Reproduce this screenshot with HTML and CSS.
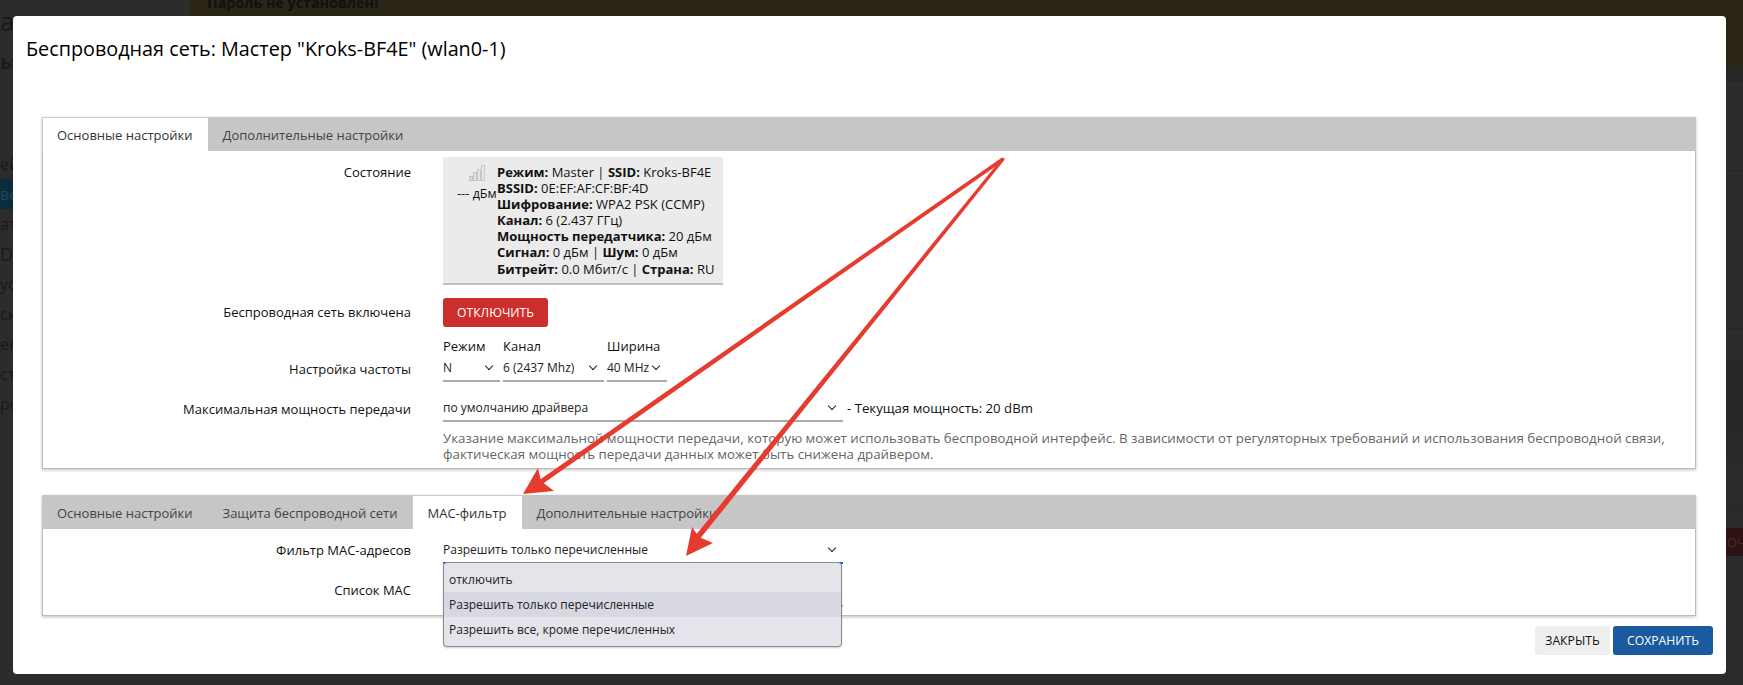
FILE: index.html
```html
<!DOCTYPE html>
<html lang="en">
<head>
    <meta charset="UTF-8">
    <meta name="viewport" content="width=device-width, initial-scale=1.0">
    <title>Беспроводная сеть</title>
    <link rel="stylesheet" href="styles.css">
</head>
<body>
    <div id="page">
        <div id="sidebar">
            <div class="side-head side-head-big">а</div>
            <div class="side-head">ы</div>
            <div class="side-item">ей</div>
            <div class="side-item side-active">во</div>
            <div class="side-item">ат</div>
            <div class="side-item side-latin">D</div>
            <div class="side-item">уст</div>
            <div class="side-item">ск</div>
            <div class="side-item">ев</div>
            <div class="side-item">сти</div>
            <div class="side-item">ро</div>
        </div>
        <div id="main">
            <div id="banner">Пароль не установлен!</div>
            <div class="bg-row bg-row-a"></div>
            <div class="bg-row bg-row-b"></div>
            <div class="bg-row bg-row-c"></div>
            <div class="bg-row bg-row-d"></div>
            <div class="bg-row bg-row-e"></div>
            <div class="bg-row bg-row-f"></div>
            <div class="bg-row bg-row-g"></div>
            <div class="bg-row bg-row-h"></div>
            <div class="bg-row bg-row-i"></div>
            <div class="bg-row bg-row-k"><span class="bg-danger">ОЧ</span></div>
        </div>
    </div>

    <div id="modal">
        <h1 id="modal-title">Беспроводная сеть: Мастер "Kroks-BF4E" (wlan0-1)</h1>

        <div class="section">
            <div class="tabs">
                <div class="tab tab-active">Основные настройки</div>
                <div class="tab">Дополнительные настройки</div>
            </div>
            <div class="section-body">
                <div class="row">
                    <div class="label label-status">Состояние</div>
                    <div class="status-box">
                        <div class="status-signal">
                            <svg class="signal-icon" width="16" height="16" viewBox="0 0 16 16">
                                <rect x="0.5" y="11.5" width="3" height="4" fill="#dcdcdc" stroke="#c2c2c2"/>
                                <rect x="4.5" y="7.5" width="3" height="8" fill="#e2e2e2" stroke="#c2c2c2"/>
                                <rect x="8.5" y="4.5" width="3" height="11" fill="#e6e6e6" stroke="#c8c8c8"/>
                                <rect x="12.5" y="0.5" width="3" height="15" fill="#e8e8e8" stroke="#c8c8c8"/>
                            </svg>
                            <div>--- дБм</div>
                        </div>
                        <div class="status-text">
                            <div><b>Режим:</b> Master | <b>SSID:</b> Kroks-BF4E</div>
                            <div><b>BSSID:</b> 0E:EF:AF:CF:BF:4D</div>
                            <div><b>Шифрование:</b> WPA2 PSK (CCMP)</div>
                            <div><b>Канал:</b> 6 (2.437 ГГц)</div>
                            <div><b>Мощность передатчика:</b> 20 дБм</div>
                            <div><b>Сигнал:</b> 0 дБм | <b>Шум:</b> 0 дБм</div>
                            <div><b>Битрейт:</b> 0.0 Мбит/с | <b>Страна:</b> RU</div>
                        </div>
                    </div>
                </div>

                <div class="row row-button">
                    <div class="label label-button">Беспроводная сеть включена</div>
                    <button class="btn btn-danger">ОТКЛЮЧИТЬ</button>
                </div>

                <div class="row row-freq">
                    <div class="label label-freq">Настройка частоты</div>
                    <div class="freq-col">
                        <div class="freq-head">Режим</div>
                        <div class="select sel-mode">N<i class="chevron"></i></div>
                    </div>
                    <div class="freq-col">
                        <div class="freq-head">Канал</div>
                        <div class="select sel-channel">6 (2437 Mhz)<i class="chevron"></i></div>
                    </div>
                    <div class="freq-col">
                        <div class="freq-head">Ширина</div>
                        <div class="select sel-width">40 MHz<i class="chevron"></i></div>
                    </div>
                </div>

                <div class="row row-power">
                    <div class="label label-power">Максимальная мощность передачи</div>
                    <div class="power-col">
                        <div class="power-line">
                            <div class="select sel-wide">по умолчанию драйвера<i class="chevron"></i></div>
                            <span class="power-now">- Текущая мощность: 20 dBm</span>
                        </div>
                        <div class="help">Указание максимальной мощности передачи, которую может использовать беспроводной интерфейс. В зависимости от регуляторных требований и использования беспроводной связи, фактическая мощность передачи данных может быть снижена драйвером.</div>
                    </div>
                </div>
            </div>
        </div>

        <div class="section section-mac">
            <div class="tabs">
                <div class="tab">Основные настройки</div>
                <div class="tab">Защита беспроводной сети</div>
                <div class="tab tab-active">MAC-фильтр</div>
                <div class="tab">Дополнительные настройки</div>
            </div>
            <div class="section-body section-body-mac">
                <div class="row">
                    <div class="label label-filter">Фильтр MAC-адресов</div>
                    <div class="select sel-wide sel-focus">Разрешить только перечисленные<i class="chevron"></i>
                        <div class="dropdown">
                            <div class="option">отключить</div>
                            <div class="option option-active">Разрешить только перечисленные</div>
                            <div class="option">Разрешить все, кроме перечисленных</div>
                        </div>
                    </div>
                </div>
                <div class="row row-maclist">
                    <div class="label label-filter">Список MAC</div>
                    <div class="select sel-wide sel-list"></div>
                </div>
            </div>
        </div>

        <div id="modal-footer">
            <button class="btn btn-close">ЗАКРЫТЬ</button>
            <button class="btn btn-save">СОХРАНИТЬ</button>
        </div>
    </div>

    <!-- annotation arrows drawn over the screenshot -->
    <svg id="arrows" width="1743" height="685" viewBox="0 0 1743 685">
        <polygon fill="#e63c30" points="1002,157.5 1004.5,158.5 1004,160.5 541,485 538,481"/>
        <polygon fill="#e63c30" points="523,494 538,468 541,481 554,491"/>
        <polygon fill="#e63c30" points="1002,158 1004.5,158.5 1004,160.5 699,540 695,536"/>
        <polygon fill="#e63c30" points="686,556 692,527 699,537 713,543"/>
    </svg>
</body>
</html>
```

FILE: styles.css
```css
body {
    font-family: "Open Sans", "Noto Sans", sans-serif;
    font-size: 13px;
    margin: 0;
    padding: 0;
    color: #111;
    background-color: #2a2a2a;
    overflow: hidden;
}

#page {
    display: flex;
    width: 1743px;
    height: 685px;
    overflow: hidden;
}

/* dimmed page behind the modal */
#sidebar {
    width: 190px;
    flex-shrink: 0;
    background-color: #2c2c2c;
    color: #191919;
    font-size: 16px;
}

.side-head {
    height: 42px;
    line-height: 42px;
    font-size: 20px;
    font-weight: bold;
}

.side-head-big {
    height: 41px;
    font-size: 26px;
    font-weight: normal;
}

.side-item {
    height: 30px;
    line-height: 30px;
    white-space: nowrap;
}

.side-head + .side-head {
    height: 108px;
    line-height: 42px;
}

.side-active {
    background-color: #0a2c3c;
    color: #1f4658;
}

.side-latin {
    font-size: 18px;
}

#main {
    flex: 1;
    min-width: 0;
}

#banner {
    height: 66px;
    background-color: #2a2515;
    color: #111;
    font-size: 14.3px;
    font-weight: bold;
    line-height: 6px;
    padding-left: 17px;
    box-sizing: border-box;
}

.bg-row {
    box-sizing: border-box;
    border-bottom: 1px solid #262626;
}

.bg-row-a { height: 16px; background-color: #262626; }
.bg-row-b { height: 89px; background-color: #2c2c2c; }
.bg-row-c { height: 8px; background-color: #2c2c2c; }
.bg-row-d { height: 150px; background-color: #2a2a2a; }
.bg-row-e { height: 32px; background-color: #2c2c2c; }
.bg-row-f { height: 66px; background-color: #272727; }
.bg-row-g { height: 30px; background-color: #282828; }
.bg-row-h { height: 52px; background-color: #2a2a2a; }
.bg-row-i { height: 19px; background-color: #2a2a2a; border-bottom: none; }

.bg-row-k {
    display: flex;
    justify-content: flex-end;
    height: 28px;
    border-bottom: none;
}

.bg-danger {
    width: 30px;
    box-sizing: border-box;
    padding-left: 14px;
    background-color: #2c1212;
    color: #4a2a2a;
    font-size: 13px;
    line-height: 28px;
    white-space: nowrap;
}

/* modal */
#modal {
    position: absolute;
    left: 13px;
    top: 16px;
    width: 1713px;
    height: 658px;
    box-sizing: border-box;
    padding: 0 30px 0 29px;
    background-color: #fff;
    border-radius: 4px;
}

#modal-title {
    margin: 0 0 0 -16px;
    height: 101px;
    padding-top: 20px;
    box-sizing: border-box;
    font-size: 19.8px;
    font-weight: normal;
    line-height: 26px;
    color: #000;
    white-space: nowrap;
}

.section {
    border: 1px solid #bdbdbd;
    border-top: none;
    box-shadow: 0 1px 3px rgba(0, 0, 0, 0.25);
    height: 352px;
    box-sizing: border-box;
}

.section-mac {
    height: 121px;
    margin-top: 26px;
}

.tabs {
    display: flex;
    height: 34px;
    margin: 0 -1px;
    background-color: #c6c6c6;
}

.tab {
    padding: 0 15px;
    line-height: 36px;
    color: #444;
    white-space: nowrap;
}

.tab-active {
    background-color: #fff;
    color: #333;
    box-shadow: inset 1px 1px 0 #ccc;
}

.section-body {
    padding-top: 6px;
}

.section-body-mac {
    padding-top: 9px;
}

.row {
    display: flex;
    column-gap: 32px;
}

.label {
    width: 368px;
    flex-shrink: 0;
    text-align: right;
    line-height: 16px;
    color: #111;
    white-space: nowrap;
}

.label-status { padding-top: 7px; }
.label-button { padding-top: 6px; }
.label-freq { padding-top: 22px; }
.label-power { padding-top: 5px; }
.label-filter { padding-top: 4px; }

.status-box {
    display: flex;
    width: 280px;
    height: 128px;
    box-sizing: border-box;
    padding: 7px 8px 8px;
    background-color: #ebebeb;
    border-bottom: 2px solid #bfbfbf;
    line-height: 16.1px;
    color: #111;
}

.status-signal {
    width: 46px;
    box-sizing: border-box;
    padding-left: 6px;
    flex-shrink: 0;
    text-align: center;
    font-size: 12.5px;
    white-space: nowrap;
}

.signal-icon {
    display: block;
    margin: 1px auto 5px;
}

.status-text {
    white-space: nowrap;
}

.row-button {
    margin-top: 13px;
}

.btn {
    height: 29px;
    border: none;
    border-radius: 3px;
    padding: 0;
    font-family: inherit;
    font-size: 12.2px;
    cursor: pointer;
}

.btn-danger {
    width: 105px;
    background-color: #cc2f2b;
    color: #fff;
}

.row-freq {
    margin-top: 12px;
    column-gap: 3px;
}

.row-freq .label {
    margin-right: 29px;
}

.freq-head {
    height: 17px;
    line-height: 14px;
}

.select {
    position: relative;
    height: 26px;
    box-sizing: border-box;
    font-size: 12px;
    line-height: 24px;
    border-bottom: 2px solid #aaa;
    color: #222;
    white-space: nowrap;
}

.chevron {
    position: absolute;
    right: 8px;
    top: 7px;
    width: 6px;
    height: 6px;
    box-sizing: border-box;
    border-right: 1.5px solid #222;
    border-bottom: 1.5px solid #222;
    transform: rotate(45deg);
}

.sel-mode { width: 57px; }
.sel-channel { width: 101px; }
.sel-width { width: 60px; }
.sel-wide { width: 400px; }
.sel-focus { border-bottom-color: #0069d6; z-index: 2; }

.row-power {
    margin-top: 14px;
}

.power-line {
    display: flex;
    align-items: flex-start;
    column-gap: 4px;
}

.power-now {
    font-size: 13.2px;
    line-height: 25px;
    white-space: nowrap;
}

.help {
    width: 1245px;
    margin-top: 8px;
    font-size: 13.3px;
    color: #666;
    line-height: 16px;
}

.row-maclist {
    margin-top: 14px;
}

.row-maclist .sel-list {
    height: 29px;
}

.dropdown {
    position: absolute;
    left: 0;
    top: 24px;
    width: 399px;
    box-sizing: border-box;
    padding: 4px 0;
    background-color: #e5e4ea;
    border: 1px solid #8c8c8c;
    border-radius: 4px;
    box-shadow: 0 1px 2px rgba(0, 0, 0, 0.2);
    color: #222;
}

.option {
    height: 25px;
    line-height: 25px;
    padding-left: 5px;
}

.option-active {
    background-color: #d8d8e2;
}

#modal-footer {
    display: flex;
    justify-content: flex-end;
    column-gap: 3px;
    margin: 10px -17px 0 0;
}

.btn-close {
    width: 75px;
    background-color: #eee;
    color: #111;
}

.btn-save {
    width: 100px;
    background-color: #1a5a9e;
    color: #fff;
}

#arrows {
    position: absolute;
    left: 0;
    top: 0;
    pointer-events: none;
}
```
